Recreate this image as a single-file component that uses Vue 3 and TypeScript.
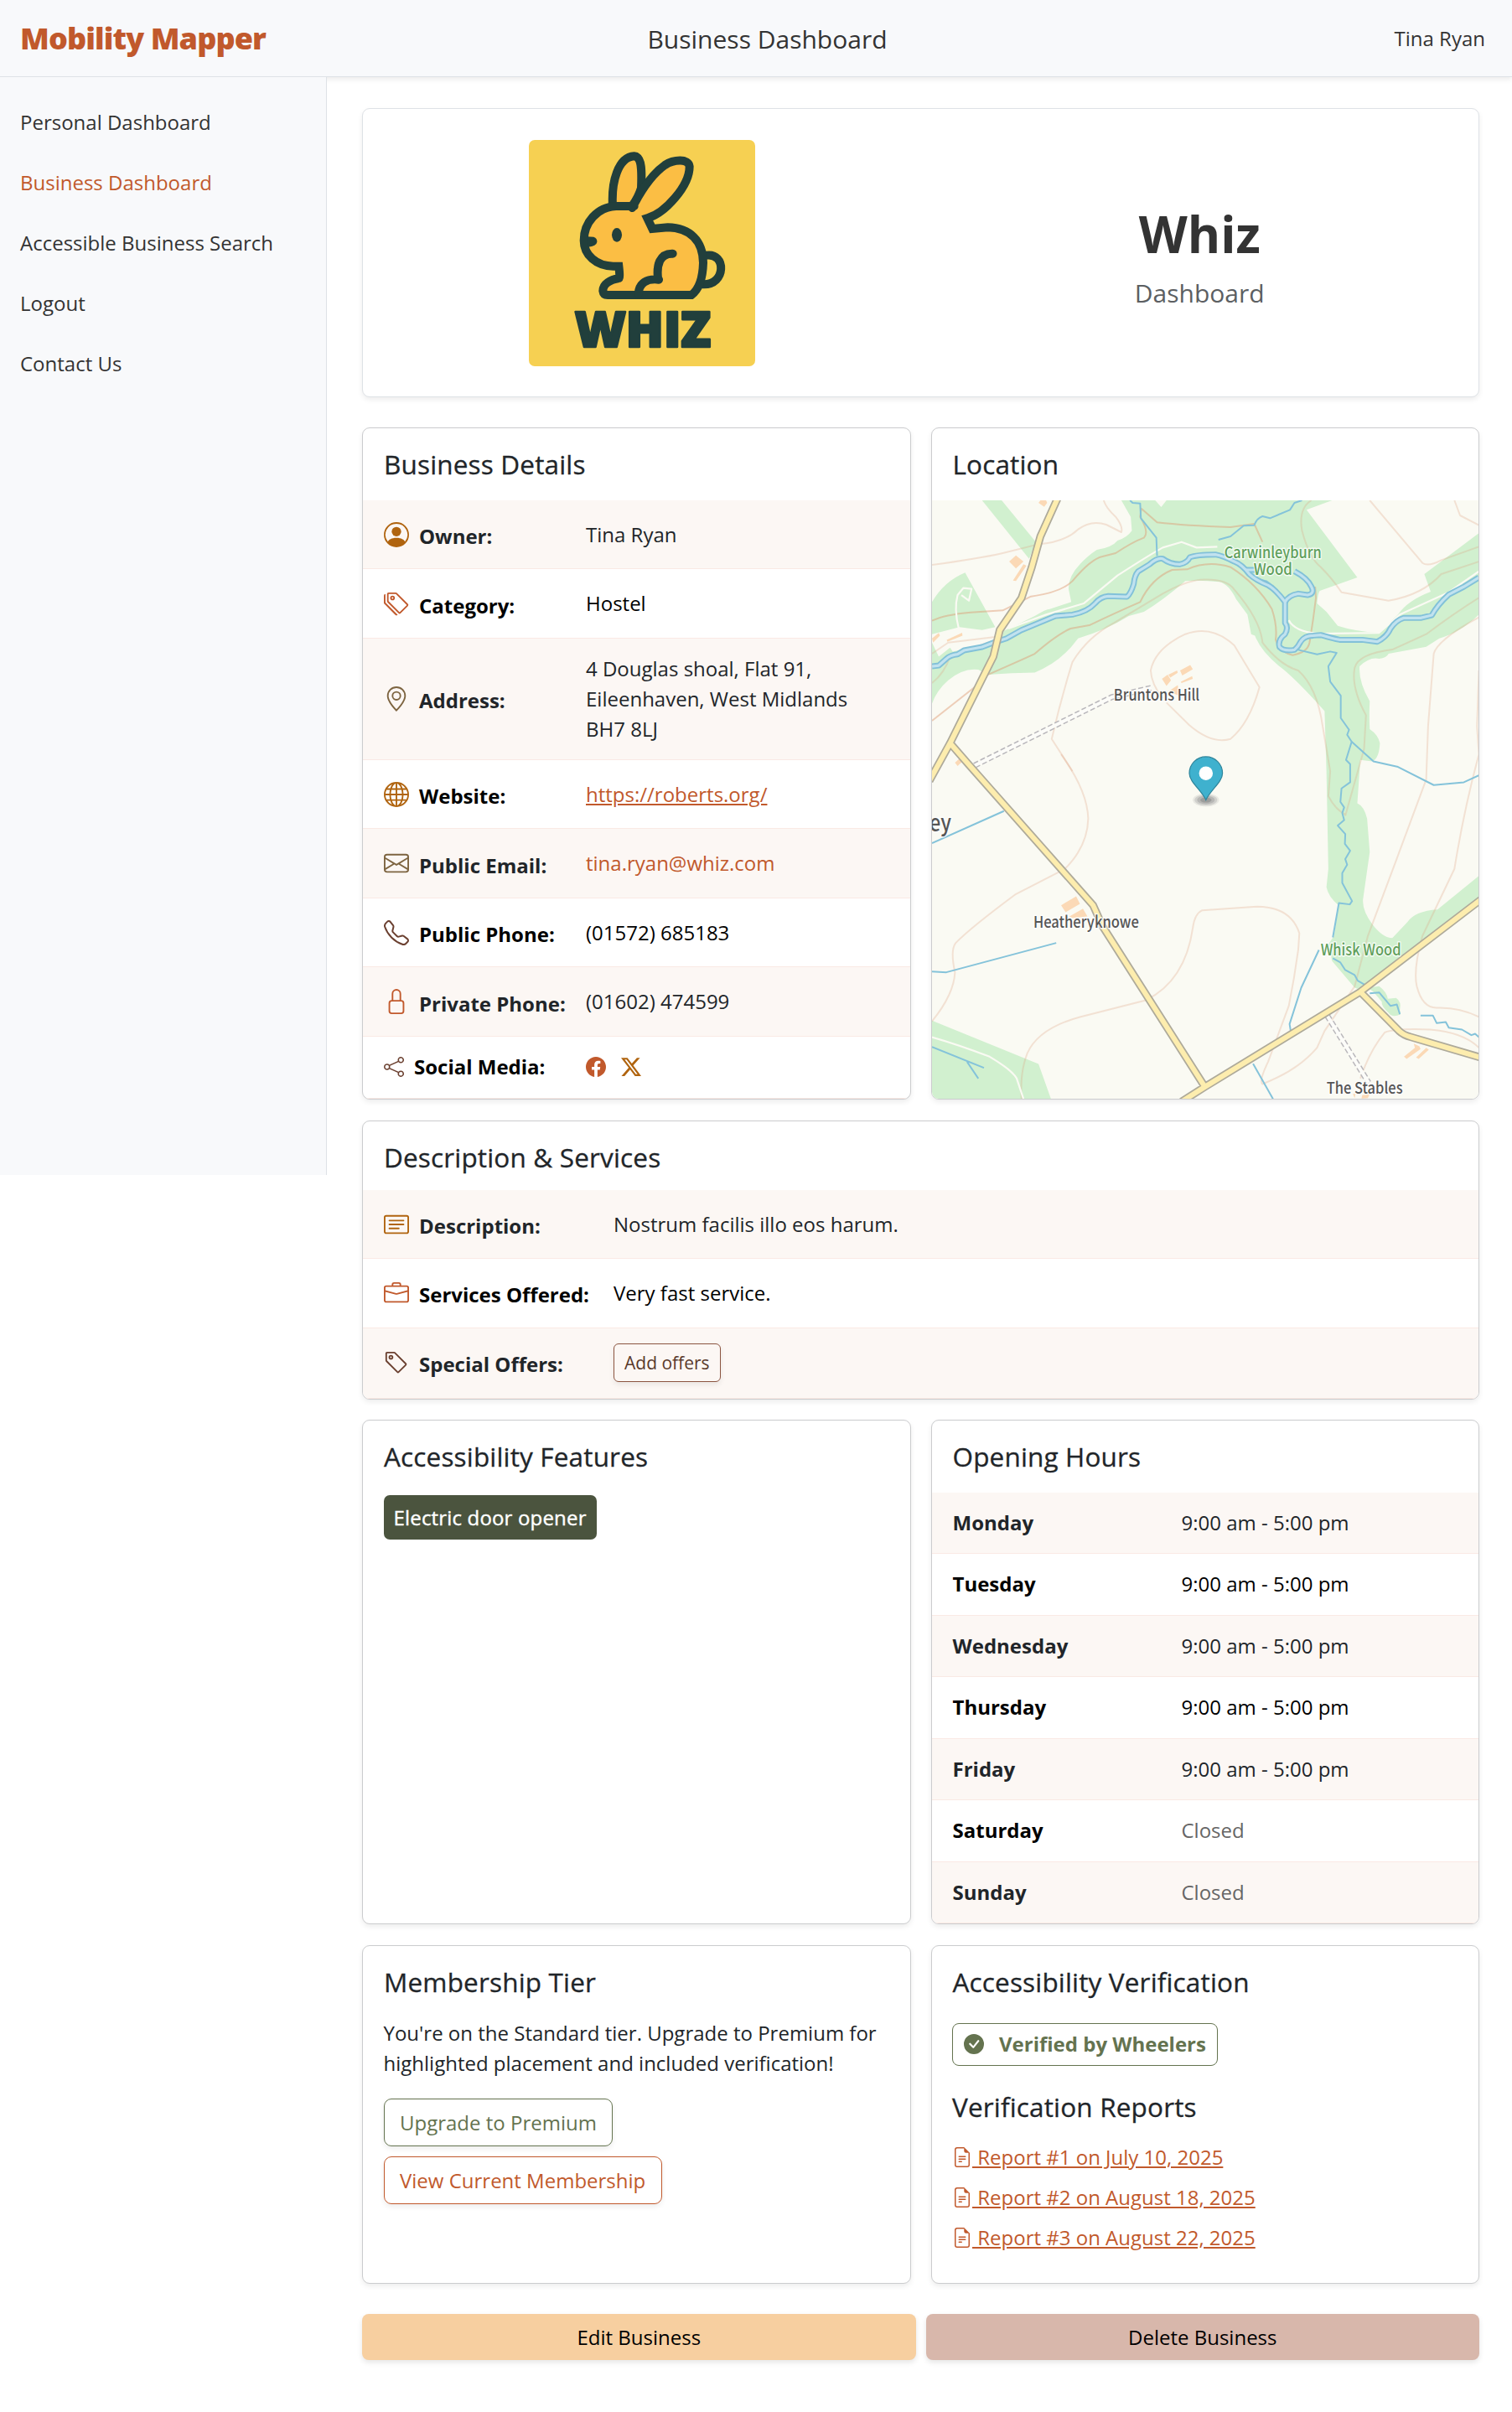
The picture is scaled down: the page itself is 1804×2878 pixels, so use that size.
<script setup lang="ts">
interface DetailRow {
  icon: string
  tone: string
  label: string
  value: string
  height: number
  kind?: 'link' | 'mail' | 'social' | 'button'
}

const icons: Record<string, string[]> = {
  person: [
    'M11 6a3 3 0 1 1-6 0 3 3 0 0 1 6 0',
    'M0 8a8 8 0 1 1 16 0A8 8 0 0 1 0 8m8-7a7 7 0 0 0-5.468 11.37C3.242 11.226 4.805 10 8 10s4.757 1.225 5.468 2.37A7 7 0 0 0 8 1',
  ],
  tags: [
    'M3 2v4.586l7 7L14.586 9l-7-7zM2 2a1 1 0 0 1 1-1h4.586a1 1 0 0 1 .707.293l7 7a1 1 0 0 1 0 1.414l-4.586 4.586a1 1 0 0 1-1.414 0l-7-7A1 1 0 0 1 2 6.586z',
    'M5.5 5a.5.5 0 1 1 0-1 .5.5 0 0 1 0 1m0 1a1.5 1.5 0 1 0 0-3 1.5 1.5 0 0 0 0 3M1 7.086a1 1 0 0 0 .293.707L8.75 15.25l-.043.043a1 1 0 0 1-1.414 0l-7-7A1 1 0 0 1 0 7.586V3a1 1 0 0 1 1-1z',
  ],
  pin: [
    'M12.166 8.94c-.524 1.062-1.234 2.12-1.96 3.07A32 32 0 0 1 8 14.58a32 32 0 0 1-2.206-2.57c-.726-.95-1.436-2.008-1.96-3.07C3.304 7.867 3 6.862 3 6a5 5 0 0 1 10 0c0 .862-.305 1.867-.834 2.94M8 16s6-5.686 6-10A6 6 0 0 0 2 6c0 4.314 6 10 6 10',
    'M8 8a2 2 0 1 1 0-4 2 2 0 0 1 0 4m0 1a3 3 0 1 0 0-6 3 3 0 0 0 0 6',
  ],
  globe: [
    'M0 8a8 8 0 1 1 16 0A8 8 0 0 1 0 8m7.5-6.923c-.67.204-1.335.82-1.887 1.855A8 8 0 0 0 5.145 4H7.5zM4.09 4a9.3 9.3 0 0 1 .64-1.539 7 7 0 0 1 .597-.933A7.03 7.03 0 0 0 2.255 4zm-.582 3.5c.03-.877.138-1.718.312-2.5H1.674a7 7 0 0 0-.656 2.5zM4.847 5a12.5 12.5 0 0 0-.338 2.5H7.5V5zM8.5 5v2.5h2.99a12.5 12.5 0 0 0-.337-2.5zM4.51 8.5a12.5 12.5 0 0 0 .337 2.5H7.5V8.5zm3.99 0V11h2.653c.187-.765.306-1.608.338-2.5zM5.145 12q.208.58.468 1.068c.552 1.035 1.218 1.65 1.887 1.855V12zm.182 2.472a7 7 0 0 1-.597-.933A9.3 9.3 0 0 1 4.09 12H2.255a7 7 0 0 0 3.072 2.472M3.82 11a13.7 13.7 0 0 1-.312-2.5h-2.49c.062.89.291 1.733.656 2.5zm6.853 3.472A7 7 0 0 0 13.745 12H11.91a9.3 9.3 0 0 1-.64 1.539 7 7 0 0 1-.597.933M8.5 12v2.923c.67-.204 1.335-.82 1.887-1.855q.26-.487.468-1.068zm3.68-1h2.146c.365-.767.594-1.61.656-2.5h-2.49a13.7 13.7 0 0 1-.312 2.5m2.802-3.5a7 7 0 0 0-.656-2.5H12.18c.174.782.282 1.623.312 2.5zM11.27 2.461c.247.464.462.98.64 1.539h1.835a7 7 0 0 0-3.072-2.472c.218.284.418.598.597.933M10.855 4a8 8 0 0 0-.468-1.068C9.835 1.897 9.17 1.282 8.5 1.077V4z',
  ],
  envelope: [
    'M0 4a2 2 0 0 1 2-2h12a2 2 0 0 1 2 2v8a2 2 0 0 1-2 2H2a2 2 0 0 1-2-2zm2-1a1 1 0 0 0-1 1v.217l7 4.2 7-4.2V4a1 1 0 0 0-1-1zm13 2.383-4.708 2.825L15 11.105zm-.034 6.876-5.64-3.471L8 9.583l-1.326-.795-5.64 3.47A1 1 0 0 0 2 13h12a1 1 0 0 0 .966-.741M1 11.105l4.708-2.897L1 5.383z',
  ],
  phone: [
    'M3.654 1.328a.678.678 0 0 0-1.015-.063L1.605 2.3c-.483.484-.661 1.169-.45 1.77a17.6 17.6 0 0 0 4.168 6.608 17.6 17.6 0 0 0 6.608 4.168c.601.211 1.286.033 1.77-.45l1.034-1.034a.678.678 0 0 0-.063-1.015l-2.307-1.794a.68.68 0 0 0-.58-.122l-2.19.547a1.75 1.75 0 0 1-1.657-.459L5.482 8.062a1.75 1.75 0 0 1-.46-1.657l.548-2.19a.68.68 0 0 0-.122-.58zM1.884.511a1.745 1.745 0 0 1 2.612.163L6.29 2.98c.329.423.445.974.315 1.494l-.547 2.19a.68.68 0 0 0 .178.643l2.457 2.457a.68.68 0 0 0 .644.178l2.189-.547a1.75 1.75 0 0 1 1.494.315l2.306 1.794c.829.645.905 1.87.163 2.611l-1.034 1.034c-.74.74-1.846 1.065-2.877.702a18.6 18.6 0 0 1-7.01-4.42 18.6 18.6 0 0 1-4.42-7.009c-.362-1.03-.037-2.137.703-2.877z',
  ],
  lock: [
    'M8 1a2 2 0 0 1 2 2v4H6V3a2 2 0 0 1 2-2m3 6V3a3 3 0 0 0-6 0v4a2 2 0 0 0-2 2v5a2 2 0 0 0 2 2h6a2 2 0 0 0 2-2V9a2 2 0 0 0-2-2M5 8h6a1 1 0 0 1 1 1v5a1 1 0 0 1-1 1H5a1 1 0 0 1-1-1V9a1 1 0 0 1 1-1',
  ],
  share: [
    'M13.5 1a1.5 1.5 0 1 0 0 3 1.5 1.5 0 0 0 0-3M11 2.5a2.5 2.5 0 1 1 .603 1.628l-6.718 3.12a2.5 2.5 0 0 1 0 1.504l6.718 3.12a2.5 2.5 0 1 1-.488.876l-6.718-3.12a2.5 2.5 0 1 1 0-3.256l6.718-3.12A2.5 2.5 0 0 1 11 2.5m-8.5 4a1.5 1.5 0 1 0 0 3 1.5 1.5 0 0 0 0-3m11 5.5a1.5 1.5 0 1 0 0 3 1.5 1.5 0 0 0 0-3',
  ],
  facebook: [
    'M16 8.049c0-4.446-3.582-8.05-8-8.05C3.58 0-.002 3.603-.002 8.05c0 4.017 2.926 7.347 6.75 7.951v-5.625h-2.03V8.05H6.75V6.275c0-2.017 1.195-3.131 3.022-3.131.876 0 1.791.157 1.791.157v1.98h-1.009c-.993 0-1.303.621-1.303 1.258v1.51h2.218l-.354 2.326H9.25V16c3.824-.604 6.75-3.934 6.75-7.951',
  ],
  x: [
    'M12.6.75h2.454l-5.36 6.142L16 15.25h-4.937l-3.867-5.07-4.425 5.07H.316l5.733-6.57L0 .75h5.063l3.495 4.633L12.601.75Zm-.86 13.028h1.36L4.323 2.145H2.865z',
  ],
  card: [
    'M14.5 3a.5.5 0 0 1 .5.5v9a.5.5 0 0 1-.5.5h-13a.5.5 0 0 1-.5-.5v-9a.5.5 0 0 1 .5-.5zm-13-1A1.5 1.5 0 0 0 0 3.5v9A1.5 1.5 0 0 0 1.5 14h13a1.5 1.5 0 0 0 1.5-1.5v-9A1.5 1.5 0 0 0 14.5 2z',
    'M3 5.5a.5.5 0 0 1 .5-.5h9a.5.5 0 0 1 0 1h-9a.5.5 0 0 1-.5-.5M3 8a.5.5 0 0 1 .5-.5h9a.5.5 0 0 1 0 1h-9A.5.5 0 0 1 3 8m0 2.5a.5.5 0 0 1 .5-.5h6a.5.5 0 0 1 0 1h-6a.5.5 0 0 1-.5-.5',
  ],
  briefcase: [
    'M6.5 1A1.5 1.5 0 0 0 5 2.5V3H1.5A1.5 1.5 0 0 0 0 4.5v8A1.5 1.5 0 0 0 1.5 14h13a1.5 1.5 0 0 0 1.5-1.5v-8A1.5 1.5 0 0 0 14.5 3H11v-.5A1.5 1.5 0 0 0 9.5 1zm0 1h3a.5.5 0 0 1 .5.5V3H6v-.5a.5.5 0 0 1 .5-.5m1.886 6.914L15 7.151V12.5a.5.5 0 0 1-.5.5h-13a.5.5 0 0 1-.5-.5V7.15l6.614 1.764a1.5 1.5 0 0 0 .772 0M1.5 4h13a.5.5 0 0 1 .5.5v1.616L8.129 7.948a.5.5 0 0 1-.258 0L1 6.116V4.5a.5.5 0 0 1 .5-.5',
  ],
  tag: [
    'M6 4.5a1.5 1.5 0 1 1-3 0 1.5 1.5 0 0 1 3 0m-1 0a.5.5 0 1 0-1 0 .5.5 0 0 0 1 0',
    'M2 1h4.586a1 1 0 0 1 .707.293l7 7a1 1 0 0 1 0 1.414l-4.586 4.586a1 1 0 0 1-1.414 0l-7-7A1 1 0 0 1 1 6.586V2a1 1 0 0 1 1-1m0 5.586 7 7L13.586 9l-7-7H2z',
  ],
  check: [
    'M16 8A8 8 0 1 1 0 8a8 8 0 0 1 16 0m-3.97-3.03a.75.75 0 0 0-1.08.022L7.477 9.417 5.384 7.323a.75.75 0 0 0-1.06 1.06L6.97 11.03a.75.75 0 0 0 1.079-.02l3.992-4.99a.75.75 0 0 0-.01-1.05z',
  ],
  file: [
    'M5.5 7a.5.5 0 0 0 0 1h5a.5.5 0 0 0 0-1zM5 9.5a.5.5 0 0 1 .5-.5h5a.5.5 0 0 1 0 1h-5a.5.5 0 0 1-.5-.5m0 2a.5.5 0 0 1 .5-.5h2a.5.5 0 0 1 0 1h-2a.5.5 0 0 1-.5-.5',
    'M9.5 0H4a2 2 0 0 0-2 2v12a2 2 0 0 0 2 2h8a2 2 0 0 0 2-2V4.5zm0 1v2A1.5 1.5 0 0 0 11 4.5h2V14a1 1 0 0 1-1 1H4a1 1 0 0 1-1-1V2a1 1 0 0 1 1-1z',
  ],
}

const nav = ['Personal Dashboard', 'Business Dashboard', 'Accessible Business Search', 'Logout', 'Contact Us']
const activeNav = 'Business Dashboard'

const details: DetailRow[] = [
  { icon: 'person', tone: 'amber', label: 'Owner:', value: 'Tina Ryan', height: 82.5 },
  { icon: 'tags', tone: 'rust', label: 'Category:', value: 'Hostel', height: 82.5 },
  { icon: 'pin', tone: 'olive', label: 'Address:', value: '4 Douglas shoal, Flat 91, Eileenhaven, West Midlands BH7 8LJ', height: 145 },
  { icon: 'globe', tone: 'amber', label: 'Website:', value: 'https://roberts.org/', height: 82.5, kind: 'link' },
  { icon: 'envelope', tone: 'olive', label: 'Public Email:', value: 'tina.ryan@whiz.com', height: 82.5, kind: 'mail' },
  { icon: 'phone', tone: 'brown', label: 'Public Phone:', value: '(01572) 685183', height: 82.5 },
  { icon: 'lock', tone: 'rust', label: 'Private Phone:', value: '(01602) 474599', height: 82.5 },
  { icon: 'share', tone: 'brown', label: 'Social Media:', value: '', height: 74.2, kind: 'social' },
]

const services: DetailRow[] = [
  { icon: 'card', tone: 'amber', label: 'Description:', value: 'Nostrum facilis illo eos harum.', height: 82 },
  { icon: 'briefcase', tone: 'rust', label: 'Services Offered:', value: 'Very fast service.', height: 82.5 },
  { icon: 'tag', tone: 'brown', label: 'Special Offers:', value: 'Add offers', height: 84, kind: 'button' },
]

const open = '9:00 am - 5:00 pm'
const hours = [
  { day: 'Monday', time: open },
  { day: 'Tuesday', time: open },
  { day: 'Wednesday', time: open },
  { day: 'Thursday', time: open },
  { day: 'Friday', time: open },
  { day: 'Saturday', time: 'Closed' },
  { day: 'Sunday', time: 'Closed' },
]

const reports = ['Report #1 on July 10, 2025', 'Report #2 on August 18, 2025', 'Report #3 on August 22, 2025']

const woods = [
  'M530 291L555 350L558 400Q545 425 520 435Q505 460 465 468Q440 490 420 520Q388 565 390 610L397 655L340 680Q330 680 300 705L240 745L215 760L175 915Q240 908 300 907Q370 870 415 785Q490 755 550 705L590 690Q640 650 700 580Q740 575 790 583Q815 590 835 645L865 700L875 770L885 775Q900 830 950 885Q990 925 1070 1045L1075 1260L1080 1610L1075 1675Q1080 1710 1107 1740L1095 1850L1080 1880L1090 1940L1150 2035L1168 2045L1480 1720L1480 1635L1370 1755Q1310 1760 1290 1800L1250 1857Q1225 1857 1198 1810Q1170 1760 1172 1720L1190 1550L1183 1430Q1175 1385 1157 1375L1165 1220L1197 1225Q1215 1215 1217 1160Q1212 1130 1190 1110Q1188 1060 1190 1010Q1160 940 1163 885Q1190 850 1215 858Q1235 855 1240 840L1340 815L1375 785Q1430 765 1480 700L1480 408L1335 555L1352 618Q1290 650 1265 700L1215 765Q1150 760 1105 740L1075 690L1050 660Q1052 625 1057 615L1157 567L1022 325L1090 291L650 291L636 315L620 291Z',
  'M160 291L212 291L303 440L285 500Z',
  'M27 655Q60 580 115 550L195 745L160 755L100 745L27 770Z',
  'M27 800L45 850L75 818L82 832L205 795L200 910L175 915Q160 905 150 897Q110 890 70 935Q40 970 27 1018Z',
  'M27 2153L310 2308L343 2433L27 2433Z',
  'M1185 2035L1215 2030Q1235 2050 1238 2075L1260 2072Q1275 2085 1270 2115L1272 2130Q1250 2145 1240 2125Q1220 2100 1222 2085L1200 2050Z',
]

const contours = [
  'M27 522Q150 500 215 480L310 448Q380 440 415 395Q450 360 490 378L530 405Q535 385 515 350Q490 320 483 291',
  'M400 1260L345 1145Q370 1000 400 870Q440 780 510 730L640 625Q700 580 740 575Q810 570 830 610Q900 720 905 800Q950 880 1000 900Q1050 960 1065 1100L1085 1260L1080 1350Q1100 1400 1125 1415',
  'M650 1015L710 1095Q770 1165 820 1145Q870 1090 897 960L830 810Q770 735 700 770Q620 820 608 900Q610 950 640 1000',
  'M370 1200Q440 1330 442 1430Q440 1530 380 1610L250 1700Q130 1820 90 1875Q75 1900 88 1980Q85 2060 27 2155',
  'M265 2433Q260 2340 280 2270Q310 2180 420 2140L595 2080Q700 2010 720 1820Q725 1770 745 1758L890 1745Q980 1745 1003 1840L1000 1900Q990 2000 975 2100L920 2300Q895 2370 905 2380Q1000 2330 1050 2250L1070 2190L1150 2030L1185 1850L1260 1580L1340 1290L1345 1100L1360 840Q1370 790 1480 710',
  'M1480 900L1475 1100L1480 1200Q1440 1400 1415 1610L1330 1850Q1305 1970 1315 2030Q1330 2110 1370 2107Q1430 2105 1480 2140',
  'M1165 2360Q1190 2260 1230 2195Q1260 2180 1350 2185Q1440 2195 1480 2250',
  'M1190 291L1330 515Q1345 530 1380 505L1480 457',
  'M1415 291L1430 345L1480 380',
  'M1035 291Q1000 320 1010 400Q1030 500 1060 530Q1090 570 1115 620L1240 650Q1330 630 1380 555L1480 510',
  'M1125 1420L1175 1180L1180 1060Q1140 960 1150 890Q1160 840 1250 825L1340 770Q1420 690 1480 640',
  'M27 945Q60 910 75 850L195 790',
  'M27 840L70 800L195 780',
]

const ridges = [
  'M27 722Q60 700 130 692L215 685Q260 655 290 635Q370 620 400 580Q450 500 480 492L515 480Q560 440 590 425Q605 405 580 350L583 320L625 370Q700 382 820 387L883 375L905 440',
  'M27 1080L140 960',
  'M175 915Q260 865 300 840Q360 770 395 750L445 738Q520 690 580 655Q610 570 665 540L705 538Q760 505 820 530Q890 590 930 680Q945 740 940 790Q950 835 985 845Q1025 835 1030 800Q1040 720 1047 640L1045 600',
]

const tracks = [
  'M230 750L330 700L430 660L520 560Q600 490 640 460L690 440L730 460L785 457',
  'M98 750Q85 680 95 630L110 605L132 608L125 650L105 630',
  'M975 720Q990 760 1050 768L1215 765L1270 700L1400 620L1480 545',
  'M27 2212Q100 2240 180 2282Q240 2330 252 2360L270 2433',
]

const rivers = [
  'M27 885L45 882Q55 870 65 858Q75 845 95 842L112 828L160 816L195 798L225 785L265 755L355 705L400 700Q440 690 460 660Q475 636 495 634L545 636Q555 625 563 590Q565 560 575 545L605 520Q625 495 640 500Q660 520 685 520Q705 515 712 495Q730 485 780 485Q800 490 830 510Q850 520 870 555Q885 575 920 595Q940 610 965 655L965 730Q975 745 965 770Q945 790 950 815Q960 832 990 826Q1000 815 1005 800Q1015 775 1040 775L1060 773Q1090 785 1110 790L1170 790L1210 797Q1235 780 1245 750Q1260 720 1280 712L1325 712L1355 702Q1370 665 1400 628L1440 600L1480 567',
  'M965 655Q975 630 1000 625L1025 630Q1045 625 1035 600Q1025 570 990 545',
  'M860 540L885 540',
]

const streams = [
  'M553 291L560 300L580 302L582 355L623 425L625 490',
  'M788 432L820 420L855 382L883 380Q890 355 905 348L925 355L978 325L990 300L1010 291',
  'M885 570L915 580L935 600',
  'M1000 826L1050 842L1085 832L1102 837L1080 885L1085 940L1113 990L1113 1070L1135 1112L1130 1130L1142 1155L1127 1220L1138 1235L1138 1300L1115 1322L1112 1370L1122 1390L1117 1410L1122 1435L1105 1455L1125 1485L1124 1520L1138 1545L1125 1575L1130 1595L1117 1625L1117 1660L1143 1725L1137 1737L1108 1732L1092 1855',
  'M1092 1930L1112 1945L1125 1972L1150 1990L1158 2010L1180 2027',
  'M1142 1155L1200 1225L1265 1245L1360 1310L1440 1300L1480 1275',
  'M27 1518L218 1403',
  'M27 1977L65 1980L357 1875',
  'M1055 1900L1008 2035L977 2165L980 2190',
  'M880 2307L933 2433',
  'M27 2247L165 2322M120 2300L150 2360',
  'M1325 2135L1358 2135L1368 2162L1392 2158L1400 2178L1435 2185L1460 2205L1470 2200L1480 2212',
  'M1190 2055L1215 2052L1245 2100L1262 2095L1270 2130',
]

const roads =
  'M362 280L315 420L292 530L265 640L207 755L190 850L160 930L75 1160L20 1295M75 1160L130 1245L455 1740L480 1815L752 2390M690 2443L752 2390L1165 2050L1490 1715M1165 2050L1268 2190Q1280 2205 1300 2212L1490 2287'

const lanes = 'M140 1240L505 995L610 962M1077 2135L1187 2375'

const buildings =
  'M310 300L315 291L330 291L333 300L325 314ZM232 510L250 488L270 510L250 535ZM242 578L270 520L278 525L250 580ZM66 790L107 765L108 775L68 797ZM27 785L45 766L48 775L30 800ZM638 930L653 915L662 935L650 955ZM655 915L678 900L680 908L660 925ZM686 900L713 880L720 895L692 918ZM688 940L718 920L720 930L690 945ZM655 975L680 952L683 990ZM370 1740L410 1708L420 1735L382 1765ZM392 1780L428 1752L440 1780L400 1785ZM88 1230L100 1215L108 1225L95 1242ZM1281 2282L1310 2250L1307 2235L1322 2245L1325 2255L1288 2290ZM1313 2285L1340 2250L1347 2257L1320 2290ZM1145 2415L1152 2415L1150 2430ZM1170 2420L1190 2415L1185 2430L1168 2432Z'
</script>

<template>
  <div class="page">
    <header class="topbar">
      <div class="brand">Mobility Mapper</div>
      <div class="page-title">Business Dashboard</div>
      <div class="user">Tina Ryan</div>
    </header>

    <div class="body">
      <nav class="sidebar">
        <a v-for="item in nav" :key="item" class="nav-item" :class="{ active: item === activeNav }">{{ item }}</a>
      </nav>

      <main class="content">
        <section class="hero">
          <div class="hero-half">
            <svg class="logo" viewBox="93 50 810 810" aria-label="Whiz logo">
              <rect x="93" y="50" width="810" height="810" fill="#f6d052" />
              <g fill="#fbbe44" stroke="#213f3c" stroke-width="30" stroke-linejoin="round" stroke-linecap="round">
                <path fill="#f6d052" d="M728 463C800 452 800 570 716 567" />
                <path d="M393 287C388 200 412 112 470 108C500 110 497 170 495 222Q485 255 462 287Z" />
                <path
                  stroke-linejoin="miter"
                  d="M470 287L405 287C338 290 290 345 290 410C290 462 335 502 395 502L415 502Q420 545 415 545C385 550 358 565 358 590Q360 605 375 605L675 605C695 590 715 560 717 490C716 410 670 365 590 363L535 368L517 330C580 312 668 215 668 145C665 115 610 120 580 140C530 175 490 240 463 293"
                />
                <path fill="none" d="M608 457C560 455 550 500 555 545L558 550C515 545 488 562 485 600" />
              </g>
              <ellipse cx="408" cy="390" rx="18" ry="25" fill="#213f3c" />
              <path d="M300 396L325 397Q338 402 337 415Q335 430 305 433Z" fill="#213f3c" />
              <text class="logo-word" x="257" y="791" textLength="488" lengthAdjust="spacingAndGlyphs">WHIZ</text>
            </svg>
          </div>
          <div class="hero-half hero-text">
            <h1>Whiz</h1>
            <p>Dashboard</p>
          </div>
        </section>

        <div class="columns">
          <section class="card">
            <h2 class="card-title">Business Details</h2>
            <div
              v-for="row in details"
              :key="row.label"
              class="row"
              :class="row.kind"
              :style="{ height: row.height + 'px' }"
            >
              <svg class="icon" :class="row.tone" viewBox="0 0 16 16">
                <path v-for="d in icons[row.icon]" :key="d" :d="d" fill-rule="evenodd" />
              </svg>
              <span class="label">{{ row.label }}</span>
              <span v-if="row.kind === 'social'" class="value socials">
                <svg class="rust" viewBox="0 0 16 16"><path :d="icons.facebook[0]" /></svg>
                <svg class="amber" viewBox="0 0 16 16"><path :d="icons.x[0]" /></svg>
              </span>
              <span v-else class="value">{{ row.value }}</span>
            </div>
          </section>

          <section class="card map-card">
            <h2 class="card-title">Location</h2>
            <div class="map">
              <svg class="terrain" viewBox="27 291 1453 2142" preserveAspectRatio="none">
                <path v-for="d in woods" :key="d" :d="d" class="wood" />
                <path v-for="d in contours" :key="d" :d="d" class="contour" />
                <path v-for="d in ridges" :key="d" :d="d" class="ridge" />
                <path v-for="d in tracks" :key="d" :d="d" class="track" />
                <path :d="buildings" class="building" />
                <path v-for="d in streams" :key="d" :d="d" class="stream" />
                <path v-for="d in rivers" :key="d" :d="d" class="river-bank" />
                <path v-for="d in rivers" :key="'w' + d" :d="d" class="river" />
                <path :d="lanes" class="lane-edge" />
                <path :d="lanes" class="lane" />
                <path :d="roads" class="road-edge" />
                <path :d="roads" class="road" />
              </svg>
              <svg class="labels" viewBox="0 0 653 714">
                <text class="green" x="349" y="69" textLength="116" lengthAdjust="spacingAndGlyphs">Carwinleyburn</text>
                <text class="green" x="384" y="89" textLength="46" lengthAdjust="spacingAndGlyphs">Wood</text>
                <text x="217" y="239" textLength="102.5" lengthAdjust="spacingAndGlyphs">Bruntons Hill</text>
                <text class="big" x="-3" y="395" textLength="26" lengthAdjust="spacingAndGlyphs">ey</text>
                <text x="121" y="510" textLength="126" lengthAdjust="spacingAndGlyphs">Heatheryknowe</text>
                <text class="green" x="464" y="543" textLength="96" lengthAdjust="spacingAndGlyphs">Whisk Wood</text>
                <text x="471" y="708" textLength="91" lengthAdjust="spacingAndGlyphs">The Stables</text>
                <g transform="translate(306.8 305.3) scale(1.5)">
                  <ellipse cx="13.5" cy="34.8" rx="10.5" ry="5.25" opacity=".08" />
                  <ellipse cx="13.5" cy="34.8" rx="9" ry="4.3" opacity=".12" />
                  <ellipse cx="13.5" cy="34.8" rx="7" ry="3.3" opacity=".14" />
                  <ellipse cx="13.5" cy="34.8" rx="4.5" ry="2" opacity=".18" />
                  <path
                    d="M13.5 34.8C10 27 .3 20.5 .3 13.5C.3 6.2 6.2 .3 13.5 .3C20.8 .3 26.7 6.2 26.7 13.5C26.7 20.5 17 27 13.5 34.8Z"
                    fill="#3fb1ce"
                    stroke="#2f859b"
                    stroke-width=".8"
                  />
                  <circle cx="13.5" cy="13.5" r="5.5" fill="#fff" />
                </g>
              </svg>
            </div>
          </section>
        </div>

        <section class="card wide">
          <h2 class="card-title short">Description &amp; Services</h2>
          <div
            v-for="row in services"
            :key="row.label"
            class="row"
            :class="row.kind"
            :style="{ height: row.height + 'px' }"
          >
            <svg class="icon" :class="row.tone" viewBox="0 0 16 16">
              <path v-for="d in icons[row.icon]" :key="d" :d="d" fill-rule="evenodd" />
            </svg>
            <span class="label">{{ row.label }}</span>
            <button v-if="row.kind === 'button'" class="small-btn">{{ row.value }}</button>
            <span v-else class="value">{{ row.value }}</span>
          </div>
        </section>

        <div class="columns">
          <section class="card">
            <h2 class="card-title">Accessibility Features</h2>
            <span class="feature">Electric door opener</span>
          </section>

          <section class="card">
            <h2 class="card-title">Opening Hours</h2>
            <div v-for="h in hours" :key="h.day" class="row hours">
              <span class="day">{{ h.day }}</span>
              <span :class="{ closed: h.time === 'Closed' }">{{ h.time }}</span>
            </div>
          </section>
        </div>

        <div class="columns last">
          <section class="card">
            <h2 class="card-title">Membership Tier</h2>
            <div class="card-body">
              <p>You're on the Standard tier. Upgrade to Premium for highlighted placement and included verification!</p>
              <button class="btn moss">Upgrade to Premium</button>
              <button class="btn clay">View Current Membership</button>
            </div>
          </section>

          <section class="card">
            <h2 class="card-title">Accessibility Verification</h2>
            <div class="card-body verify">
              <div class="verified">
                <svg viewBox="0 0 16 16"><path :d="icons.check[0]" /></svg>
                <span>Verified by Wheelers</span>
              </div>
              <h2 class="sub-title">Verification Reports</h2>
              <a v-for="r in reports" :key="r" class="report">
                <svg viewBox="0 0 16 16"><path v-for="d in icons.file" :key="d" :d="d" /></svg>
                <span>&nbsp;{{ r }}</span>
              </a>
            </div>
          </section>
        </div>

        <div class="actions">
          <button class="edit">Edit Business</button>
          <button class="delete">Delete Business</button>
        </div>
      </main>
    </div>
  </div>
</template>

<style>
body {
  background: #fff;
}
</style>

<style scoped>
.page,
.page * {
  box-sizing: border-box;
}
.page {
  width: 1804px;
  height: 2878px;
  overflow: hidden;
  font-family: 'Open Sans', 'Noto Sans', sans-serif;
  font-size: 24px;
  line-height: 36px;
  color: #212529;
}
h1,
h2,
p {
  margin: 0;
  font-weight: 400;
}
button {
  font-family: inherit;
  background: transparent;
}
svg {
  fill: currentColor;
  flex: none;
}
.topbar {
  display: grid;
  grid-template-columns: 1fr auto 1fr;
  align-items: center;
  height: 92px;
  padding: 0 32px 0 24px;
  background: #f8f9fb;
  border-bottom: 1px solid #dee2e6;
  box-shadow: 0 3px 6px rgba(0, 0, 0, 0.075);
  color: #333;
}
.brand {
  font-size: 36px;
  font-weight: 800;
  letter-spacing: -0.9px;
  color: #c1592c;
}
.page-title {
  font-size: 30px;
  padding: 2px 0 0 35px;
}
.user {
  text-align: right;
}
.body {
  display: flex;
  align-items: flex-start;
}
.sidebar {
  position: relative;
  width: 390px;
  height: 1310px;
  padding-top: 18px;
  background: #f8f9fb;
  border-right: 1px solid #dee2e6;
}
.nav-item {
  display: block;
  padding: 18px 24px;
  color: #333;
}
.nav-item.active {
  color: #c1592c;
}
.content {
  width: 1333px;
  margin: 37px 0 0 42px;
}
.hero {
  display: flex;
  align-items: center;
  height: 345px;
  margin-bottom: 36px;
  background: #fff;
  border: 1px solid #dee2e6;
  border-radius: 9px;
  box-shadow: 0 3px 6px rgba(0, 0, 0, 0.075);
}
.hero-half {
  width: 50%;
  display: flex;
  justify-content: center;
}
.hero-text {
  flex-direction: column;
  align-items: center;
  padding-top: 12px;
}
.logo {
  width: 270px;
  height: 270px;
  border-radius: 7px;
}
.logo-word {
  font-family: 'Open Sans', sans-serif;
  font-size: 173px;
  font-weight: 800;
  fill: #213f3c;
  stroke: #213f3c;
  stroke-width: 8px;
  stroke-linejoin: round;
}
.hero h1 {
  font-size: 60px;
  line-height: 72px;
  font-weight: 700;
  color: #333;
}
.hero p {
  margin-top: 12px;
  font-size: 30px;
  line-height: 45px;
  color: #5c5f62;
}
.columns {
  display: grid;
  grid-template-columns: 1fr 1fr;
  gap: 24px;
  margin-bottom: 25px;
}
.columns.last {
  margin-bottom: 36px;
}
.card {
  background: #fff;
  border: 1px solid #cbccce;
  border-radius: 9px;
  box-shadow: 0 3px 6px rgba(0, 0, 0, 0.075);
  overflow: hidden;
}
.card.wide {
  margin-bottom: 24px;
}
.card-title,
.sub-title {
  font-size: 31.5px;
  line-height: 37.8px;
  letter-spacing: 0.16px;
  -webkit-text-stroke: 0.3px currentColor;
}
.card-title {
  padding: 24px 24px 24px 25px;
}
.card-title.short {
  padding-bottom: 20.5px;
}
.row {
  display: flex;
  align-items: center;
  padding: 0 24px 0 25px;
  color: #000;
  border-bottom: 1px solid #fae9e4;
}
.row:nth-child(even) {
  color: #212529;
  background: #fcf7f4;
}
.icon {
  width: 30px;
  height: 30px;
  margin-right: 12px;
}
.label {
  width: 199px;
  padding-top: 5px;
  font-weight: 700;
  white-space: nowrap;
}
.wide .label {
  width: 232px;
  padding-top: 4px;
}
.value {
  flex: 1;
  max-width: 330px;
}
.wide .value {
  max-width: none;
}
.link .value {
  color: #c1592c;
  text-decoration: underline;
}
.mail .value {
  color: #c1592c;
}
.social .icon {
  width: 24px;
  height: 24px;
}
.social .label {
  width: 205px;
  padding-top: 0;
}
.socials {
  display: flex;
  gap: 18px;
}
.socials svg {
  width: 24px;
  height: 24px;
}
.amber {
  color: #b0640f;
}
.rust {
  color: #c1592c;
}
.olive {
  color: #7d6440;
}
.brown {
  color: #6b4030;
}
.small-btn {
  height: 46px;
  padding: 0 12px;
  font-size: 21px;
  color: #5a3a2c;
  border: 1px solid #8b5440;
  border-radius: 6px;
  box-shadow: 0 3px 6px rgba(0, 0, 0, 0.075);
}
.hours {
  height: 73.5px;
}
.day {
  width: 273px;
  font-weight: 700;
}
.closed {
  color: #666;
}
.map-card {
  display: flex;
  flex-direction: column;
}
.map {
  position: relative;
  flex: 1;
  background: #fafaf3;
}
.map svg {
  position: absolute;
  inset: 0;
  width: 100%;
  height: 100%;
}
.terrain path {
  vector-effect: non-scaling-stroke;
  fill: none;
  stroke-linejoin: round;
}
.terrain .wood {
  fill: #d1f0cf;
}
.terrain .building {
  fill: #fbd9b6;
}
.contour {
  stroke: rgba(222, 160, 125, 0.27);
  stroke-width: 2px;
}
.ridge {
  stroke: rgba(222, 150, 110, 0.45);
  stroke-width: 2px;
}
.track {
  stroke: #fafaf3;
  stroke-width: 2.2px;
}
.stream {
  stroke: #84c3da;
  stroke-width: 2px;
}
.river-bank {
  stroke: #82c1d9;
  stroke-width: 7px;
}
.river {
  stroke: #c1e2ef;
  stroke-width: 3.2px;
}
.lane-edge {
  stroke: #b9b7bb;
  stroke-width: 7px;
  stroke-dasharray: 6 3;
}
.lane {
  stroke: #fcfcf9;
  stroke-width: 4px;
}
.road-edge {
  stroke: #aeaa9a;
  stroke-width: 9.5px;
}
.road {
  stroke: #fdedae;
  stroke-width: 6px;
}
.labels text {
  font-family: 'Noto Sans CJK SC', 'Noto Sans', sans-serif;
  font-size: 19px;
  font-weight: 500;
  fill: #555;
  stroke: rgba(255, 255, 255, 0.75);
  stroke-width: 3px;
  paint-order: stroke;
  stroke-linejoin: round;
}
.labels .green {
  fill: #5f9f5b;
}
.labels .big {
  font-size: 28px;
}
.feature {
  display: inline-block;
  height: 53px;
  margin: 3px 24px 0 24.5px;
  padding: 9px 12px 8px;
  border-radius: 7px;
  background: #4b543e;
  color: #fff;
  letter-spacing: 0.17px;
  -webkit-text-stroke: 0.4px currentColor;
}
.card-body {
  display: flex;
  flex-direction: column;
  align-items: flex-start;
  padding: 0 24px 24px 24.5px;
}
.card-body p {
  margin-bottom: 24px;
}
.btn {
  height: 57px;
  padding: 0 18.5px;
  font-size: 24px;
  border: 1px solid;
  border-radius: 9px;
  box-shadow: 0 3px 6px rgba(0, 0, 0, 0.075);
}
.btn + .btn {
  margin-top: 12px;
}
.moss {
  color: #64734f;
}
.clay {
  color: #c1592c;
}
.verified {
  display: flex;
  align-items: center;
  height: 51px;
  margin: 6px 0 30px;
  padding: 0 13px;
  gap: 18px;
  color: #64734f;
  font-weight: 700;
  border: 1px solid;
  border-radius: 8px;
}
.verified svg,
.report svg {
  width: 24px;
  height: 24px;
}
.sub-title {
  margin-bottom: 17px;
}
.report {
  display: flex;
  align-items: center;
  height: 48px;
  color: #c1592c;
}
.report span {
  text-decoration: underline;
}
.verify {
  padding-bottom: 30.5px;
}
.actions {
  display: flex;
  gap: 12px;
}
.actions button {
  flex: 1;
  height: 55px;
  font-size: 24px;
  color: #000;
  border: 0;
  border-radius: 8px;
  box-shadow: 0 3px 6px rgba(0, 0, 0, 0.1);
}
.actions .edit {
  background: #f7cfa0;
}
.actions .delete {
  background: #d8b7ab;
}
</style>
